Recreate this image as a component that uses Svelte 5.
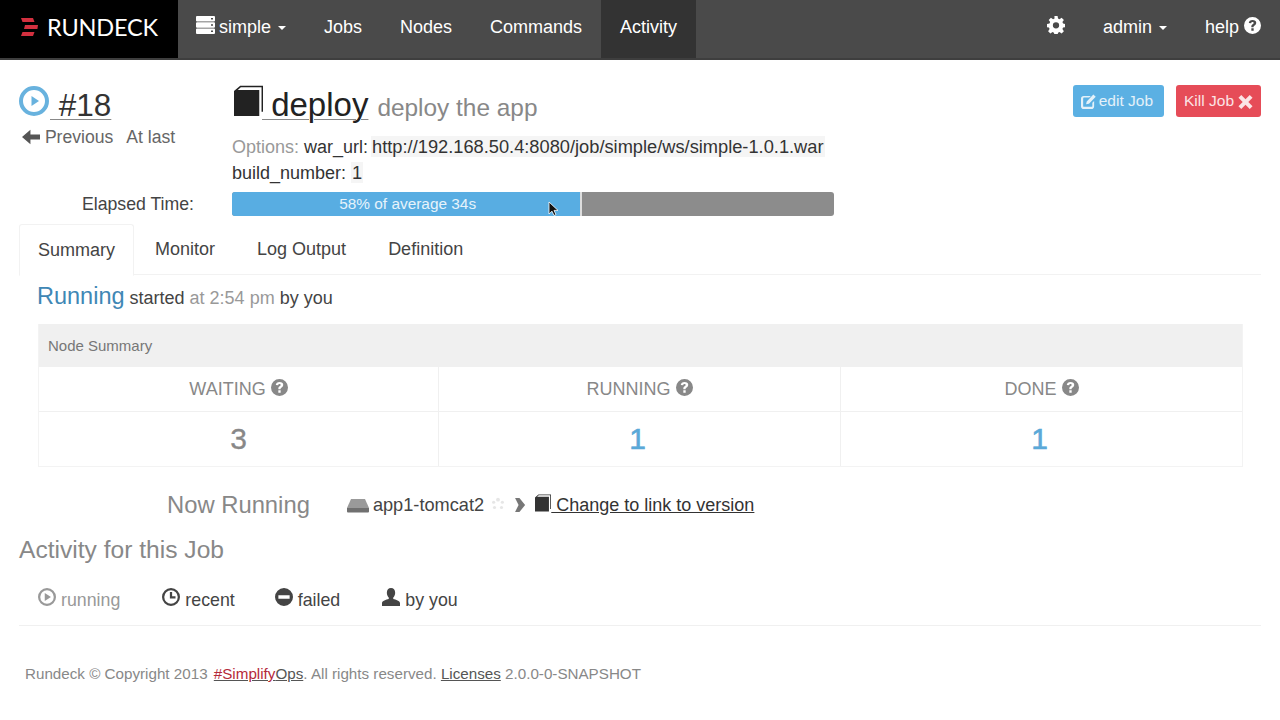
<script>
  const paths = {
    gear: 'M6.6 0h2.8l.4 2.2 1.3.6 1.9-1.3 2 2-1.3 1.9.6 1.3 2.2.4v2.8l-2.2.4-.6 1.3 1.3 1.9-2 2-1.9-1.3-1.3.6-.4 2.2H6.6l-.4-2.2-1.3-.6L3 15.500l-2-2 1.300-1.900-.6-1.300L0 9.900V7.100l2.200-.4.6-1.300L1.500 3.500l2-2 1.900 1.300 1.300-.6ZM8 5.500a2.800 2.800 0 1 0 0 5.600 2.800 2.800 0 0 0 0-5.600Z',
    back: 'M7.500 1.500v4.300H16v4.400H7.500v4.300L0 8Z',
    edit: 'M3 2h7.500L8.700 3.800H3.200a.9.900 0 0 0-.9.9v8a.9.900 0 0 0 .9.9h8a.9.900 0 0 0 .9-.9V9.300L14 7.500V13a3 3 0 0 1-3 3H3a3 3 0 0 1-3-3V5a3 3 0 0 1 3-3ZM13.200.5 15.700 3 8.500 10.300 5.400 11l.7-3.100Z',
    cross: 'M3.500 1 8 5.500 12.500 1 15.500 4 11 8.500l4.500 4.500-3 3L8 11.500 3.500 16 .5 13 5 8.500.5 4Z',
    chevron: 'M3.500 0h5l6.500 8-6.500 8h-5l4-8Z',
    user: 'M8 0c2.300 0 3.700 1.700 3.700 4.200 0 1.800-.8 3.400-1.700 4.200v1.400c2.200.6 6 1.500 6 3.700V16H0v-2.500c0-2.200 3.800-3.100 6-3.700V8.400C5.100 7.600 4.300 6 4.300 4.200 4.300 1.700 5.700 0 8 0Z'
  };
  const navItems = ['Jobs', 'Nodes', 'Commands', 'Activity'];
  const tabs = ['Summary', 'Monitor', 'Log Output', 'Definition'];
  const counts = [
    { label: 'WAITING', value: 3, idle: true },
    { label: 'RUNNING', value: 1 },
    { label: 'DONE', value: 1 }
  ];
</script>

{#snippet icon(name, cls)}
  <svg class="icon {cls}" viewBox="0 0 16 16" aria-hidden="true"><path d={paths[name]} /></svg>
{/snippet}

{#snippet book(cls)}
  <svg class="icon {cls}" viewBox="0 0 14 16" preserveAspectRatio="none" aria-hidden="true">
    <path d="M0 3 3 .4h11v13h-.7V1.100H3.300L1.800 2.500h10.400V15.500H0Z" />
  </svg>
{/snippet}

{#snippet help(cls)}
  <svg class="icon {cls}" viewBox="0 0 16 16" aria-hidden="true">
    <path fill-rule="evenodd" d="M8 0a8 8 0 1 1 0 16A8 8 0 0 1 8 0ZM8 2.800c-2 0-3.300 1-3.500 2.800l2.200.3c.1-.8.6-1.200 1.300-1.200s1.100.4 1.100.9c0 .5-.4.8-1 1.300-.9.7-1.200 1.300-1.200 2.300v.5h2.100v-.3c0-.6.2-.9 1-1.500 1-.7 1.500-1.500 1.500-2.600 0-1.500-1.400-2.500-3.500-2.500ZM6.900 10.700v2.200h2.200v-2.200Z" />
  </svg>
{/snippet}

<header class="navbar">
  <a class="brand" href="#top">
    <svg class="logo" viewBox="0 0 19 18" aria-hidden="true">
      <path d="M1 0h12l1.500 4H2.500ZM5 7h13l-.6 4H4ZM2.500 14h12L13 18H1Z" />
    </svg>
    <span>RUNDECK</span>
  </a>
  <nav class="nav">
    <a class="item" href="#top">
      <svg class="icon hdd" viewBox="0 0 19 18" aria-hidden="true">
        <path fill-rule="evenodd" d="M1 0h17a1 1 0 0 1 1 1v3.500a1 1 0 0 1-1 1H1a1 1 0 0 1-1-1V1a1 1 0 0 1 1-1Zm14 2v1.500h2V2ZM1 6.300h17a1 1 0 0 1 1 1v3.400a1 1 0 0 1-1 1H1a1 1 0 0 1-1-1V7.300a1 1 0 0 1 1-1Zm14 2v1.400h2V8.300ZM1 12.500h17a1 1 0 0 1 1 1V17a1 1 0 0 1-1 1H1a1 1 0 0 1-1-1v-3.500a1 1 0 0 1 1-1Zm14 2V16h2v-1.500Z" />
      </svg>simple<i class="caret"></i>
    </a>
    {#each navItems as item}
      <a class="item" class:active={item === 'Activity'} href="#top">{item}</a>
    {/each}
  </nav>
  <nav class="nav right">
    <a class="item" href="#top">{@render icon('gear', 'gear')}</a>
    <a class="item" href="#top">admin<i class="caret"></i></a>
    <a class="item" href="#top">help {@render help('help-nav')}</a>
  </nav>
</header>

<main class="page">
  <section class="job-head">
    <div class="exec">
      <h1>
        <svg class="run-ring" viewBox="0 0 30 30" aria-hidden="true">
          <circle cx="15" cy="15" r="13" />
          <path d="M12.500 10 20 15l-7.500 5Z" />
        </svg>
        <a href="#top">&nbsp;#18</a>
      </h1>
      <div class="prev">
        <span>{@render icon('back', 'back')} Previous</span>
        <span>At last</span>
      </div>
    </div>
    <div class="job">
      <div class="job-top">
        <div class="title">
          {@render book('book')}<a href="#top">&nbsp;deploy</a>
          <small>deploy the app</small>
        </div>
        <div class="actions">
          <button class="btn info">{@render icon('edit', 'btn-icon')} edit Job</button>
          <button class="btn danger">Kill Job {@render icon('cross', 'btn-icon')}</button>
        </div>
      </div>
      <div class="options">
        <span class="muted">Options:</span> war_url: <code class="url">http://192.168.50.4:8080/job/simple/ws/simple-1.0.1.war</code><br />
        build_number: <code>1</code>
      </div>
    </div>
  </section>

  <section class="elapsed">
    <span class="elapsed-label">Elapsed Time:</span>
    <div class="progress">
      <div class="bar" style="width: 58.2%">58% of average 34s</div>
    </div>
  </section>

  <ul class="tabs">
    {#each tabs as tab, i}
      <li class:active={i === 0}>{tab}</li>
    {/each}
  </ul>

  <section class="summary">
    <p class="state"><b>Running</b> started <span class="muted">at 2:54 pm</span> by you</p>
    <div class="panel">
      <div class="panel-title">Node Summary</div>
      <div class="counts">
        {#each counts as c}
          <div class="count-head">{c.label} {@render help('help-count')}</div>
        {/each}
        {#each counts as c}
          <div class="count-val" class:idle={c.idle}>{c.value}</div>
        {/each}
      </div>
    </div>
    <div class="now">
      <span class="now-label">Now Running</span>
      <span class="now-node">
        <svg class="drive" viewBox="0 0 22 14" aria-hidden="true">
          <path d="M4 0h14l4 9H0Z" fill="#9a9a9a" /><path d="M0 9h22v3.500a1 1 0 0 1-1 1H1a1 1 0 0 1-1-1Z" fill="#707070" />
        </svg>app1-tomcat2
        <svg class="spinner" viewBox="0 0 16 16" aria-hidden="true">
          <circle cx="8" cy="3" r="2.200" /><circle cx="3" cy="6" r="1.800" /><circle cx="13" cy="6" r="1.800" /><circle cx="4" cy="12" r="1.800" /><circle cx="12" cy="12" r="1.800" />
        </svg>
        {@render icon('chevron', 'chevron')}
        {@render book('book-small')}<a href="#top">&nbsp;Change to link to version</a>
      </span>
    </div>
  </section>

  <h3 class="activity">Activity for this Job</h3>
  <ul class="filters">
    <li class="off">
      <svg class="icon filter-icon" viewBox="0 0 16 16" aria-hidden="true">
        <circle cx="8" cy="8" r="7" fill="none" stroke="currentColor" stroke-width="2" /><path d="M6 4.500 11.500 8 6 11.500Z" />
      </svg>running
    </li>
    <li class="recent">
      <svg class="icon filter-icon" viewBox="0 0 16 16" aria-hidden="true">
        <circle cx="8" cy="8" r="7" fill="none" stroke="currentColor" stroke-width="2" /><path d="M7 3.500h2v3.800h3v2H7Z" />
      </svg>recent
    </li>
    <li class="failed">
      <svg class="icon filter-icon" viewBox="0 0 16 16" aria-hidden="true">
        <path fill-rule="evenodd" d="M8 0a8 8 0 1 1 0 16A8 8 0 0 1 8 0ZM3 6.500v3h10v-3Z" />
      </svg>failed
    </li>
    <li>{@render icon('user', 'filter-icon')}by you</li>
  </ul>

  <footer class="foot">
    Rundeck © Copyright 2013 <a class="simplify" href="#top"><span>#Simplify</span>Ops</a>. All rights reserved. <a href="#top">Licenses</a> 2.0.0-0-SNAPSHOT
  </footer>
</main>

<svg class="cursor" viewBox="0 0 12 16" aria-hidden="true">
  <path d="M1 1v12l3-2.800 2 4.300 2-.9-2-4.200h4Z" stroke="#fff" stroke-width=".8" />
</svg>

<style>
  :global(body) {
    background: #fff;
    font-family: "Liberation Sans", Arial, sans-serif;
    font-size: 18px;
    color: #333;
    overflow: hidden;
  }
  a { color: inherit; }
  .icon { display: inline-block; fill: currentColor; vertical-align: -2px; }
  .muted { color: #999; }

  .navbar {
    display: flex;
    height: 58px;
    background: #4a4a4a;
    border-bottom: 2px solid #3e3e3e;
    color: #fff;
  }
  .brand {
    display: flex;
    align-items: center;
    gap: 8px;
    width: 178px;
    box-sizing: border-box;
    padding: 0 0 4px 20px;
    background: #000;
    font-family: Lato, "Liberation Sans", sans-serif;
    font-size: 23.500px;
    letter-spacing: -.2px;
    color: #fff;
    text-decoration: none;
  }
  .logo { width: 19px; height: 18px; fill: #d3303f; }
  .nav { display: flex; }
  .nav.right { margin-left: auto; }
  .item {
    display: flex;
    align-items: center;
    padding: 0 19px 4px;
    color: #fff;
    text-decoration: none;
    white-space: pre;
  }
  .item.active { background: #333; }
  .hdd { width: 19px; height: 18px; margin: -5px 4px 0 -1px; }
  .gear { width: 18px; height: 18px; margin-top: -4px; }
  .help-nav { width: 17px; height: 17px; margin-top: -4px; }
  .caret {
    width: 0;
    height: 0;
    margin-left: 7px;
    margin-top: 2px;
    border-top: 4px solid #fff;
    border-left: 4px solid transparent;
    border-right: 4px solid transparent;
  }

  .page { padding: 0 19px; }
  .job-head { display: grid; grid-template-columns: 213px 1fr; padding-top: 24px; }
  h1 {
    display: flex;
    align-items: center;
    margin: 0;
    height: 38px;
    font-size: 31.500px;
    font-weight: 400;
  }
  .run-ring { width: 30px; height: 30px; margin: -5px 1px 0 0; }
  .run-ring circle { fill: none; stroke: #68b2de; stroke-width: 4px; }
  .run-ring path { fill: #68b2de; }
  h1 a { padding-top: 4px; }
  h1 a, .title a { text-decoration-thickness: 1px; text-underline-offset: 3px; text-decoration-color: #888; }
  .prev { display: flex; gap: 13px; margin-top: 5px; padding-left: 3px; color: #666; font-size: 17.600px; }
  .back { width: 18px; height: 18px; vertical-align: -3px; color: #555; }

  .job-top { display: flex; justify-content: space-between; align-items: flex-start; }
  .title { display: flex; align-items: center; height: 38px; font-size: 33px; color: #222; white-space: pre; }
  .book { width: 29px; height: 32px; margin: -5px -1px 0 2px; color: #222; }
  .title a { color: #222; padding-top: 4px; }
  .title small { margin: 10px 0 0 9px; font-size: 24.400px; color: #888; }
  .actions { display: flex; gap: 12px; margin-top: 1px; }
  .btn {
    display: flex;
    align-items: center;
    gap: 4px;
    height: 32px;
    padding: 0 8px;
    border: none;
    border-radius: 3px;
    font: inherit;
    font-size: 15.500px;
    color: #e4f1f9;
  }
  .btn-icon { width: 15px; height: 15px; }
  .info { gap: 3px; padding-right: 11px; background: #5bb0e3; }
  .danger { background: #e64c58; color: #fbe4e6; }

  .options { margin-top: 12px; line-height: 25px; color: #333; }
  code { padding: 0 1px; background: #f5f5f5; font: inherit; font-size: 18.250px; }
  .url { margin-left: -2px; }

  .elapsed { display: grid; grid-template-columns: 175px 602px; column-gap: 38px; align-items: center; margin-top: 6px; }
  .elapsed-label { text-align: right; color: #444; font-size: 17.700px; }
  .progress { height: 24px; border-radius: 3px; overflow: hidden; background: #8c8c8c; }
  .bar {
    height: 100%;
    padding-left: 3px;
    border-right: 2px solid #ddd;
    box-sizing: border-box;
    background: #58ade2;
    color: #e6f3fb;
    font-size: 15.400px;
    line-height: 24px;
    text-align: center;
  }

  .tabs {
    display: flex;
    margin: 8px 0 0;
    padding: 0;
    list-style: none;
    height: 50px;
    border-bottom: 1px solid #f2f2f2;
    color: #444;
  }
  .tabs li { padding: 15px 21px 0; }
  .tabs li.active {
    padding: 15px 18px 0;
    height: 35px;
    background: #fff;
    border: 1px solid #f2f2f2;
    border-bottom-color: #fff;
    border-radius: 3px 3px 0 0;
  }

  .summary { padding: 0 19px; }
  .state { margin: 4px 0 0; height: 34px; line-height: 34px; color: #444; }
  .state b { margin-left: -1px; font-size: 23.500px; font-weight: 400; color: #3f87b5; }
  .panel { margin-top: 11px; border: 1px solid #f3f3f3; border-top: none; margin-right: -1px; }
  .panel-title { height: 43px; line-height: 43px; padding-left: 9px; background: #f0f0f0; font-size: 15px; color: #777; }
  .counts { display: grid; grid-template-columns: 399px 1fr 1fr; }
  .count-head {
    box-sizing: border-box;
    height: 45px;
    line-height: 45px;
    text-align: center;
    color: #888;
    border-bottom: 1px solid #f0f0f0;
    border-left: 1px solid #f0f0f0;
  }
  .count-val {
    height: 54px;
    padding-right: 4px;
    line-height: 54px;
    text-align: center;
    font-size: 30px;
    color: #5aa9d8;
    border-left: 1px solid #f0f0f0;
    -webkit-text-stroke: .6px currentColor;
  }
  .count-head:nth-child(3n+1), .count-val:nth-child(3n+1) { border-left: none; }
  .count-val.idle { padding-right: 0; color: #888; -webkit-text-stroke-width: .3px; }
  .help-count { width: 17px; height: 17px; color: #888; vertical-align: -1px; }

  .now { display: flex; align-items: center; margin-top: 20px; padding-left: 129px; height: 36px; }
  .now-label { font-size: 23.800px; color: #888; }
  .now-node { margin-left: 37px; color: #444; white-space: pre; font-size: 18.200px; }
  .now-node a { color: #333; font-size: 18px; }
  .drive { display: inline-block; width: 22px; height: 14px; vertical-align: -2px; margin-right: 4px; }
  .spinner { display: inline-block; width: 14px; height: 14px; margin-left: 2px; fill: #e6e6e6; vertical-align: 0; }
  .chevron { width: 14px; height: 16px; margin-left: 2px; color: #777; vertical-align: -2px; }
  .book-small { width: 16px; height: 18px; margin-left: 4px; color: #333; vertical-align: -1px; }

  .activity { margin: 12px 0 0; font-size: 24.600px; font-weight: 400; color: #888; line-height: 30px; }
  .filters {
    display: flex;
    gap: 41px;
    margin: 0;
    padding: 23px 0 13px 19px;
    list-style: none;
    border-bottom: 1px solid #f0f0f0;
    color: #444;
    font-size: 17.800px;
    height: 24px;
    line-height: 24px;
  }
  .filters li.off { margin-right: 1px; color: #999; }
  .filters li.recent { margin-right: -1px; }
  .filters li.failed { margin-right: 1px; }
  .filter-icon { width: 18px; height: 18px; margin-right: 5px; vertical-align: 0; }
  .foot { margin-top: 39px; padding-left: 6px; font-size: 15.200px; color: #888; }
  .foot a { color: #555; }
  .foot .simplify { margin-left: 2px; }
  .foot .simplify span { color: #b5293a; }

  .cursor { position: absolute; left: 548px; top: 201px; width: 12px; height: 16px; fill: #111; }
</style>
